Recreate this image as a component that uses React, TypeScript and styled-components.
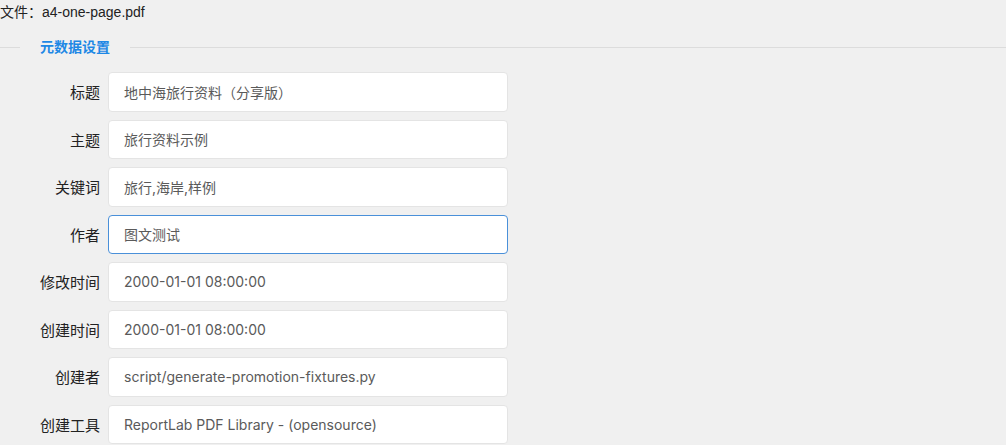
import React from "react";
import styled, { createGlobalStyle } from "styled-components";

const GlobalStyle = createGlobalStyle`
  html, body {
    margin: 0;
    padding: 0;
    background: #f0f0f0;
    font-family: "Liberation Sans", "Noto Sans CJK SC", sans-serif;
    font-size: 14px;
    color: #222;
  }
`;

const Page = styled.div`
  display: flex;
  flex-direction: column;
`;

const FileLine = styled.div`
  height: 25px;
  line-height: 25px;
  font-size: 14px;
  color: #222;
`;

const Section = styled.fieldset`
  margin: 11px 0 0 0;
  padding: 14px 0 0 0;
  border: none;
  border-top: 1px solid #dcdcdc;
  min-width: 0;
`;

const Legend = styled.legend`
  margin-left: 20px;
  padding: 0 20px;
  font-size: 14px;
  font-weight: 600;
  color: #1e88e5;
  line-height: 22px;
`;

const Form = styled.div`
  display: flex;
  flex-direction: column;
  gap: 8px;
`;

const Row = styled.label`
  display: flex;
  align-items: center;
  gap: 8px;
`;

const LabelText = styled.span`
  width: 100px;
  text-align: right;
  font-size: 15px;
  color: #222;
`;

const Field = styled.input<{ $focused?: boolean }>`
  box-sizing: border-box;
  width: 400px;
  height: 39.5px;
  padding: 0 15px;
  border-radius: 4px;
  border: 1px solid ${(p) => (p.$focused ? "#4a90d9" : "#e4e4e4")};
  background: #fff;
  font-family: Inter, "Noto Sans CJK SC", sans-serif;
  font-size: 14px;
  color: #5a5a5a;
  outline: none;
`;

const fields = [
  { label: "标题", value: "地中海旅行资料（分享版）" },
  { label: "主题", value: "旅行资料示例" },
  { label: "关键词", value: "旅行,海岸,样例" },
  { label: "作者", value: "图文测试", focused: true },
  { label: "修改时间", value: "2000-01-01 08:00:00" },
  { label: "创建时间", value: "2000-01-01 08:00:00" },
  { label: "创建者", value: "script/generate-promotion-fixtures.py" },
  { label: "创建工具", value: "ReportLab PDF Library - (opensource)" },
];

export default function App() {
  return (
    <Page>
      <GlobalStyle />
      <FileLine>文件：a4-one-page.pdf</FileLine>
      <Section>
        <Legend>元数据设置</Legend>
        <Form>
          {fields.map((f) => (
            <Row key={f.label}>
              <LabelText>{f.label}</LabelText>
              <Field defaultValue={f.value} $focused={f.focused} readOnly />
            </Row>
          ))}
        </Form>
      </Section>
    </Page>
  );
}
